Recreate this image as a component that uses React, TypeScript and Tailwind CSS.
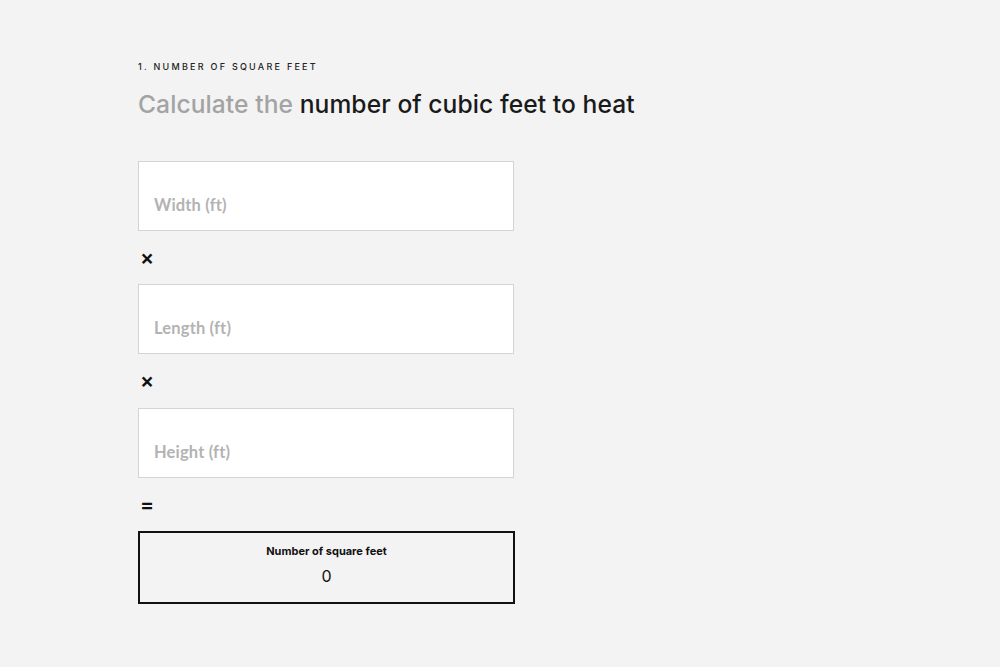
import React from "react";

function Field({ label }: { label: string }) {
  return (
    <div className="w-[376px] h-[70px] bg-white border-[1.5px] border-[#d4d4d4] flex items-end px-[15px] pb-[15px]">
      <input
        placeholder={label}
        className="w-full bg-transparent outline-none text-[16.5px] leading-[20px] font-bold tracking-[0.01em] text-[#333] placeholder:text-[#b3b3b3]"
        style={{ fontFamily: "Lato, sans-serif" }}
      />
    </div>
  );
}

function Op({ sym, tall }: { sym: string; tall?: boolean }) {
  return (
    <div
      className={`${tall ? "h-[54px]" : "h-[53px]"} flex items-center pl-[2px] text-[21px] font-semibold text-[#111]`}
      style={{ fontFamily: "Inter, sans-serif" }}
    >
      {sym}
    </div>
  );
}

export default function App() {
  return (
    <div className="min-h-[667px] w-full bg-[#f3f3f3]" style={{ fontFamily: "Inter, sans-serif" }}>
      <div className="pl-[138px] pt-[62px]">
        <div className="text-[9px] font-medium tracking-[0.25em] text-[#222] leading-[10px]">
          1. NUMBER OF SQUARE FEET
        </div>
        <h1 className="mt-[16px] text-[24.6px] font-medium leading-[32px] tracking-[0.003em]">
          <span className="text-[#a3a3a3]">Calculate the </span>
          <span className="text-[#1a1a1a]">number of cubic feet to heat</span>
        </h1>
        <div className="mt-[41px] flex flex-col">
          <Field label="Width (ft)" />
          <Op sym="×" />
          <Field label="Length (ft)" />
          <Op sym="×" tall />
          <Field label="Height (ft)" />
          <Op sym="=" />
          <div className="w-[377px] h-[73px] border-2 border-[#111] flex flex-col items-center pt-[11px]">
            <div className="text-[11px] font-bold text-[#111] leading-[14px]">Number of square feet</div>
            <div className="mt-[9px] text-[16px] text-[#111] leading-[18px]">0</div>
          </div>
        </div>
      </div>
    </div>
  );
}
